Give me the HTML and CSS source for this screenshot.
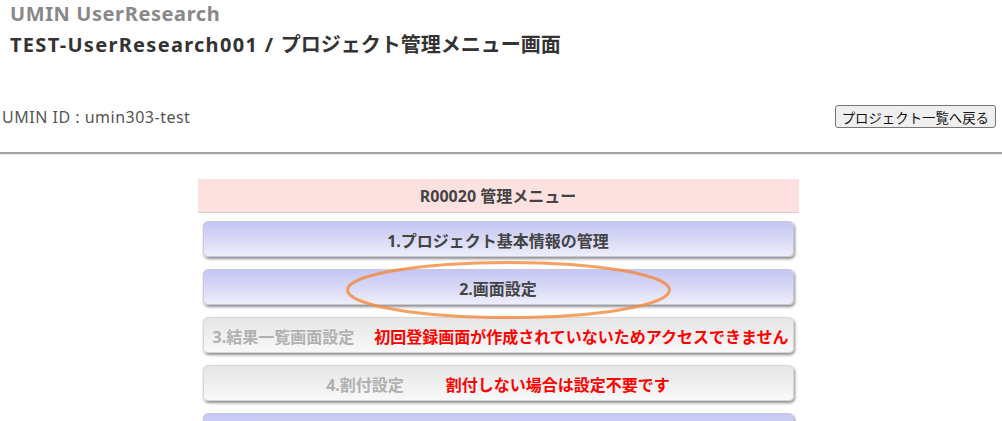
FILE: index.html
```html
<!DOCTYPE html>
<html lang="ja">
<head>
<meta charset="utf-8">
<title>プロジェクト管理メニュー画面</title>
<link rel="stylesheet" href="styles.css">
</head>
<body>
<header class="page-head">
  <div class="site-name">UMIN UserResearch</div>
  <h1 class="page-title"><span class="latin-wide">TEST-UserResearch001 / </span>プロジェクト管理メニュー画面</h1>
</header>
<div class="user-bar">
  <span class="user-id">UMIN ID : umin303-test</span>
  <button class="back-btn" type="button">プロジェクト一覧へ戻る</button>
</div>
<hr class="divider">
<main class="wrap">
  <section class="menu">
    <div class="menu-head">R00020 管理メニュー</div>
    <div class="menu-item">1.プロジェクト基本情報の管理</div>
    <div class="menu-item">2.画面設定</div>
    <div class="menu-item disabled tight"><span class="label">3.結果一覧画面設定</span><span class="note">初回登録画面が作成されていないためアクセスできません</span></div>
    <div class="menu-item disabled"><span class="label">4.割付設定</span><span class="note">割付しない場合は設定不要です</span></div>
    <div class="menu-item"></div>
  </section>
</main>
<svg class="annot" width="1002" height="421" viewBox="0 0 1002 421" aria-hidden="true">
  <ellipse cx="508.5" cy="290" rx="161" ry="27.5" fill="none" stroke="#f28a3c" stroke-opacity="0.8" stroke-width="3"/>
</svg>
</body>
</html>
```

FILE: styles.css
```css
html, body {
  margin: 0;
  padding: 0;
  background: #fff;
  overflow: hidden;
}
body {
  width: 1002px;
  height: 421px;
  font-family: "Noto Sans", "Noto Sans CJK JP", sans-serif;
  color: #444;
  position: relative;
}
.page-head {
  padding: 1px 0 0 10px;
}
.site-name {
  font-size: 20px;
  font-weight: bold;
  color: #888;
  line-height: 26px;
  letter-spacing: 0.6px;
}
.page-title {
  margin: 4px 0 0;
  font-size: 20px;
  font-weight: bold;
  color: #333;
  line-height: 28px;
}
.latin-wide {
  letter-spacing: 1.3px;
}
.user-bar {
  display: flex;
  justify-content: space-between;
  align-items: center;
  width: 996px;
  margin-top: 46px;
}
.user-id {
  padding-left: 2px;
  font-size: 16px;
  color: #555;
  letter-spacing: 0.5px;
}
.back-btn {
  font-family: "Noto Sans CJK JP", sans-serif;
  font-size: 13.4px;
  color: #111;
  background: #efefef;
  border: 1px solid #767676;
  border-radius: 3px;
  height: 23px;
  padding: 0 6px;
  line-height: 20px;
}
.divider {
  margin: 24px 0 0;
  border: 0;
  border-top: 2px solid #a4a4a4;
  border-bottom: 1px solid #ececec;
  height: 0;
}
.wrap {
  width: 996px;
  padding-top: 24px;
}
.menu {
  width: 601px;
  margin: 0 auto;
}
.menu-head {
  background: #fde0e0;
  border-bottom: 1px solid #d8d0d0;
  height: 33px;
  line-height: 34px;
  text-align: center;
  font-weight: bold;
  font-size: 16px;
  color: #444;
}
.menu-item {
  margin: 8px 5px 12px 5px;
  height: 33px;
  padding-top: 1px;
  border: 1px solid #c8c8d8;
  border-radius: 5px;
  background: linear-gradient(to bottom, #c6c6f6 0%, #d8d8f6 50%, #eeeefa 100%);
  box-shadow: 1px 2px 3px rgba(0, 0, 0, 0.45);
  display: flex;
  justify-content: center;
  align-items: center;
  font-size: 16px;
  font-weight: bold;
  color: #444;
  white-space: nowrap;
}
.menu-item + .menu-item {
  margin-top: 0;
}
.menu-item.disabled {
  background: linear-gradient(to bottom, #e6e6e6 0%, #efefef 50%, #f8f8f8 100%);
  border-color: #d6d6d6;
  color: #b0b0b0;
  gap: 42px;
}
.menu-item.tight {
  justify-content: flex-start;
  padding-left: 9px;
  gap: 20px;
}
.note {
  color: #f00;
}
.annot {
  position: absolute;
  left: 0;
  top: 0;
  pointer-events: none;
}
```
